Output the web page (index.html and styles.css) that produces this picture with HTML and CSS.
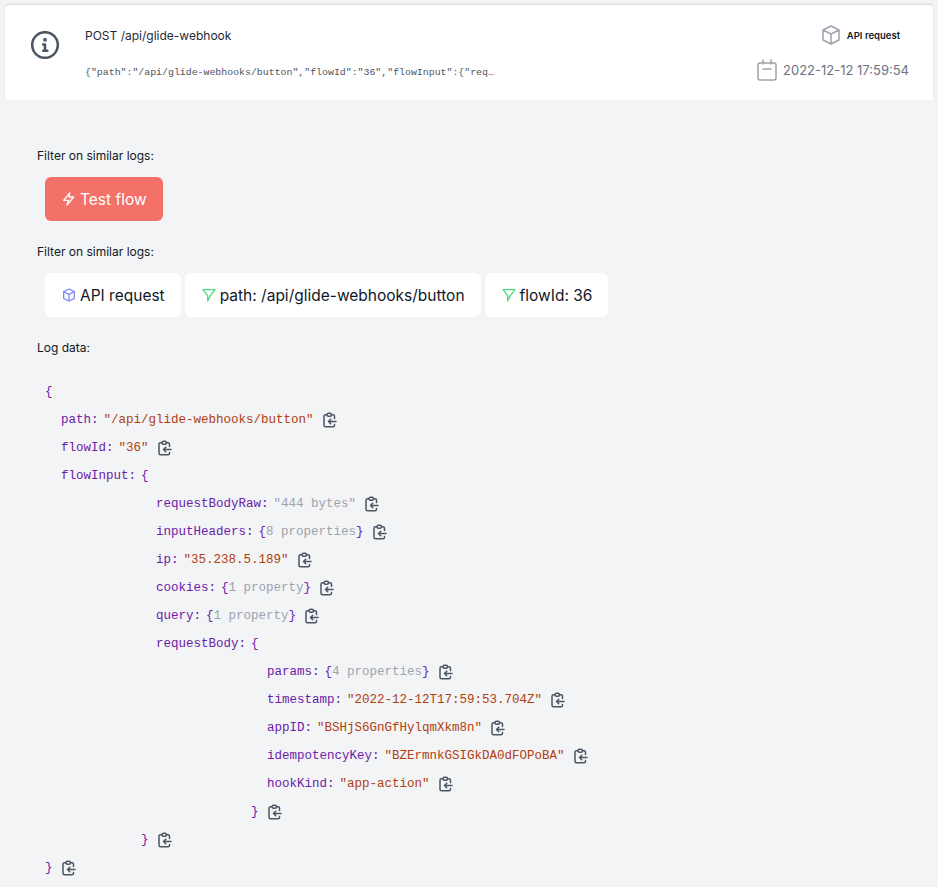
FILE: index.html
```html
<!DOCTYPE html>
<html lang="en">
<head>
    <meta charset="UTF-8">
    <title>Log detail</title>
    <link rel="stylesheet" href="styles.css">
</head>
<body>
    <svg class="sprite" width="0" height="0">
        <symbol id="copy" viewBox="0 0 24 24" fill="none" stroke-linecap="round" stroke-linejoin="round">
            <path d="M8 5H6a2 2 0 0 0-2 2v12a2 2 0 0 0 2 2h10a2 2 0 0 0 2-2v-1M8 5a2 2 0 0 0 2 2h2a2 2 0 0 0 2-2M8 5a2 2 0 0 1 2-2h2a2 2 0 0 1 2 2m0 0h2a2 2 0 0 1 2 2v3m2 4H10m0 0l3-3m-3 3l3 3"/>
        </symbol>
        <symbol id="cube" viewBox="0 0 24 24" fill="none" stroke-linecap="round" stroke-linejoin="round">
            <path d="M20 7l-8-4-8 4m16 0l-8 4m8-4v10l-8 4m0-10L4 7m8 4v10M4 7v10l8 4"/>
        </symbol>
        <symbol id="filter" viewBox="0 0 24 24" fill="none" stroke-linecap="round" stroke-linejoin="round">
            <path d="M3 4h18l-7 9-4 8v-8z"/>
        </symbol>
    </svg>

    <header class="log-head">
        <svg class="info-icon" viewBox="0 0 24 24" fill="none" stroke-linecap="round" stroke-linejoin="round">
            <circle cx="12" cy="12" r="11"/>
            <path d="M10.5 11.5H12v5.5M10.5 17h3.5"/>
            <circle class="dot" cx="12" cy="7.5" r="0.6"/>
        </svg>
        <div class="head-main">
            <div class="head-title">POST /api/glide-webhook</div>
            <div class="head-sub">{"path":"/api/glide-webhooks/button","flowId":"36","flowInput":{"req…</div>
        </div>
        <div class="head-side">
            <div class="head-type">
                <svg class="type-icon"><use href="#cube"/></svg>
                <span>API request</span>
            </div>
            <div class="head-date">
                <svg class="date-icon" viewBox="0 0 24 24" fill="none" stroke-linecap="round" stroke-linejoin="round">
                    <rect x="3" y="5" width="18" height="17" rx="2"/>
                    <path d="M8 2v4M16 2v4M8 11h8"/>
                </svg>
                <span>2022-12-12 17:59:54</span>
            </div>
        </div>
    </header>

    <main class="content">
        <p class="label">Filter on similar logs:</p>
        <div class="btn-row">
            <button class="btn btn-test">
                <svg class="btn-icon" viewBox="0 0 24 24" fill="none" stroke-linecap="round" stroke-linejoin="round"><path d="M13 3L4 14h7l-2 7 10-12h-7z"/></svg>
                Test flow
            </button>
        </div>

        <p class="label">Filter on similar logs:</p>
        <div class="btn-row">
            <button class="btn"><svg class="btn-icon cube"><use href="#cube"/></svg>API request</button>
            <button class="btn"><svg class="btn-icon funnel"><use href="#filter"/></svg>path: /api/glide-webhooks/button</button>
            <button class="btn"><svg class="btn-icon funnel"><use href="#filter"/></svg>flowId: 36</button>
        </div>

        <p class="label">Log data:</p>
        <div class="tree">
            <div class="line"><span class="brace">{</span></div>
            <div class="lvl1">
                <div class="line"><span class="key">path:</span><span class="str">"/api/glide-webhooks/button"</span><svg class="copy"><use href="#copy"/></svg></div>
                <div class="line"><span class="key">flowId:</span><span class="str">"36"</span><svg class="copy"><use href="#copy"/></svg></div>
                <div class="line"><span class="key">flowInput:</span><span class="brace">{</span></div>
                <div class="lvl2">
                    <div class="line"><span class="key">requestBodyRaw:</span><span class="str muted">"444 bytes"</span><svg class="copy"><use href="#copy"/></svg></div>
                    <div class="line"><span class="key">inputHeaders:</span><span class="brace">{</span><span class="muted">8 properties</span><span class="brace">}</span><svg class="copy"><use href="#copy"/></svg></div>
                    <div class="line"><span class="key">ip:</span><span class="str">"35.238.5.189"</span><svg class="copy"><use href="#copy"/></svg></div>
                    <div class="line"><span class="key">cookies:</span><span class="brace">{</span><span class="muted">1 property</span><span class="brace">}</span><svg class="copy"><use href="#copy"/></svg></div>
                    <div class="line"><span class="key">query:</span><span class="brace">{</span><span class="muted">1 property</span><span class="brace">}</span><svg class="copy"><use href="#copy"/></svg></div>
                    <div class="line"><span class="key">requestBody:</span><span class="brace">{</span></div>
                    <div class="lvl3">
                        <div class="line"><span class="key">params:</span><span class="brace">{</span><span class="muted">4 properties</span><span class="brace">}</span><svg class="copy"><use href="#copy"/></svg></div>
                        <div class="line"><span class="key">timestamp:</span><span class="str">"2022-12-12T17:59:53.704Z"</span><svg class="copy"><use href="#copy"/></svg></div>
                        <div class="line"><span class="key">appID:</span><span class="str">"BSHjS6GnGfHylqmXkm8n"</span><svg class="copy"><use href="#copy"/></svg></div>
                        <div class="line"><span class="key">idempotencyKey:</span><span class="str">"BZErmnkGSIGkDA0dFOPoBA"</span><svg class="copy"><use href="#copy"/></svg></div>
                        <div class="line"><span class="key">hookKind:</span><span class="str">"app-action"</span><svg class="copy"><use href="#copy"/></svg></div>
                    </div>
                    <div class="line close-3"><span class="brace">}</span><svg class="copy"><use href="#copy"/></svg></div>
                </div>
                <div class="line close-2"><span class="brace">}</span><svg class="copy"><use href="#copy"/></svg></div>
            </div>
            <div class="line"><span class="brace">}</span><svg class="copy"><use href="#copy"/></svg></div>
        </div>
    </main>
</body>
</html>
```

FILE: styles.css
```css
body {
    margin: 0;
    height: 887px;
    overflow: hidden;
    background: #f3f4f6;
    font-family: Inter, "Open Sans", sans-serif;
    color: #111827;
}

.sprite {
    position: absolute;
}

/* Header */
.log-head {
    margin: 5px 5px 0;
    height: 95px;
    background: #fff;
    border-radius: 4px 4px 0 0;
    box-shadow: 0 -1px 2px rgba(0, 0, 0, 0.12);
    display: flex;
    box-sizing: border-box;
    padding: 0 24px 0 26px;
}
.info-icon {
    width: 28px;
    height: 28px;
    margin-top: 26px;
    stroke: #4b5563;
    stroke-width: 2.2;
}
.info-icon .dot {
    fill: #4b5563;
}
.head-main {
    margin-left: 26px;
    flex: 1;
}
.head-title {
    font-size: 12px;
    line-height: 16px;
    margin-top: 23px;
    color: #1f2937;
}
.head-sub {
    font-family: "Liberation Mono", monospace;
    font-size: 9.9px;
    line-height: 14px;
    margin-top: 22px;
    color: #4b5563;
}
.head-side {
    display: flex;
    flex-direction: column;
    align-items: flex-end;
}
.head-type {
    display: flex;
    align-items: center;
    gap: 4px;
    margin-top: 18px;
    margin-right: 9px;
    font-size: 9.5px;
    font-weight: 600;
    color: #111827;
}
.type-icon {
    width: 24px;
    height: 24px;
    stroke: #9ca3af;
    stroke-width: 1.5;
}
.date-icon {
    width: 24px;
    height: 24px;
    stroke: #9ca3af;
    stroke-width: 1.5;
}
.head-date {
    display: flex;
    align-items: center;
    gap: 4px;
    margin-top: 11px;
    font-size: 13px;
    color: #6b7280;
}

/* Content */
.content {
    padding: 48px 32px 0 37px;
}
.label {
    margin: 0;
    font-size: 12px;
    line-height: 16px;
    color: #111827;
}
.btn-row {
    display: flex;
    gap: 4px;
    padding: 13px 8px 0;
    margin-bottom: 23px;
}
.btn {
    display: flex;
    align-items: center;
    height: 44px;
    padding: 0 16px;
    border: none;
    border-radius: 6px;
    background: #fff;
    font-family: Inter, "Open Sans", sans-serif;
    font-size: 15.5px;
    color: #111827;
}
.btn-test {
    background: #f37168;
    color: #fff;
}
.btn-icon {
    width: 16px;
    height: 16px;
    margin-right: 3px;
    stroke: #fff;
    stroke-width: 2;
}
.cube {
    stroke: #818cf8;
}
.funnel {
    stroke: #4ade80;
}

/* Log tree */
.tree {
    margin-top: 22px;
    padding-left: 8px;
    font-family: "Liberation Mono", monospace;
    font-size: 12.5px;
}
.line {
    display: flex;
    align-items: center;
    height: 28px;
    white-space: pre;
}
.lvl1 {
    padding-left: 16px;
}
.lvl2 {
    padding-left: 95px;
}
.lvl3 {
    padding-left: 111px;
}
.close-2 {
    margin-left: 80px;
}
.close-3 {
    margin-left: 95px;
}
.key {
    color: #6b21a8;
    margin-right: 5px;
}
.brace {
    color: #6b21a8;
}
.str {
    color: #b1400f;
}
.muted {
    color: #9ca3af;
}
.copy {
    width: 18px;
    height: 18px;
    margin-left: 7px;
    stroke: #4b5563;
    stroke-width: 2;
}
```
